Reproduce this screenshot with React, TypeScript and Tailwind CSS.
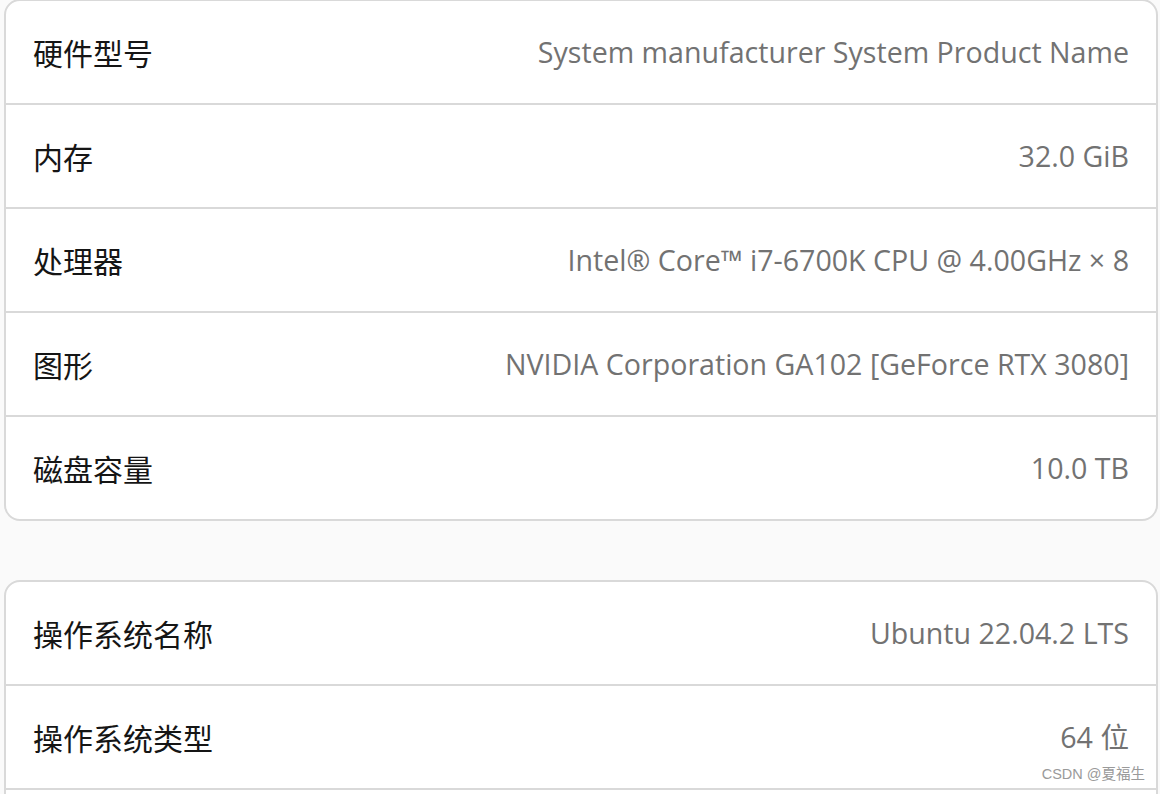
import type { FC } from 'react';

interface InfoRow {
  label: string;
  value: string;
}

const hardwareRows: InfoRow[] = [
  { label: '硬件型号', value: 'System manufacturer System Product Name' },
  { label: '内存', value: '32.0 GiB' },
  { label: '处理器', value: 'Intel® Core™ i7-6700K CPU @ 4.00GHz × 8' },
  { label: '图形', value: 'NVIDIA Corporation GA102 [GeForce RTX 3080]' },
  { label: '磁盘容量', value: '10.0 TB' }
];

// the list runs on past the window; the next row is cut off
const systemRows: InfoRow[] = [
  { label: '操作系统名称', value: 'Ubuntu 22.04.2 LTS' },
  { label: '操作系统类型', value: '64 位' },
  { label: '', value: '' }
];

const InfoCard: FC<{ rows: InfoRow[]; className?: string }> = ({ rows, className = '' }) => (
  <div className={`mx-[4px] w-[1154px] rounded-[16px] border-2 border-[#d9d9d9] bg-white overflow-hidden ${className}`}>
    {rows.map((row, index) => (
      <div
        key={index}
        className={`flex h-[102px] items-center justify-between pl-[27px] pr-[27px] ${
          index < rows.length - 1 ? 'border-b-2 border-[#d9d9d9] box-content' : ''
        }`}
      >
        <span className="text-[30px] text-[#151515] font-['Noto_Sans_CJK_SC',sans-serif]">{row.label}</span>
        <span className="text-[28.6px] text-[#727272] font-['Open_Sans','Noto_Sans_CJK_SC',sans-serif]">{row.value}</span>
      </div>
    ))}
  </div>
);

const App: FC = () => {
  return (
    <div className="relative h-[794px] w-[1160px] overflow-hidden bg-[#fafafa]">
      <InfoCard rows={hardwareRows} className="-mt-px" />
      <InfoCard rows={systemRows} className="mt-[59px]" />

      {/* watermark */}
      <span className="absolute right-[15px] bottom-[8px] text-[14.5px] text-[#9a9a9a] font-['Liberation_Sans','Noto_Sans_CJK_SC',sans-serif]">
        CSDN @夏福生
      </span>
    </div>
  );
};

export default App;
